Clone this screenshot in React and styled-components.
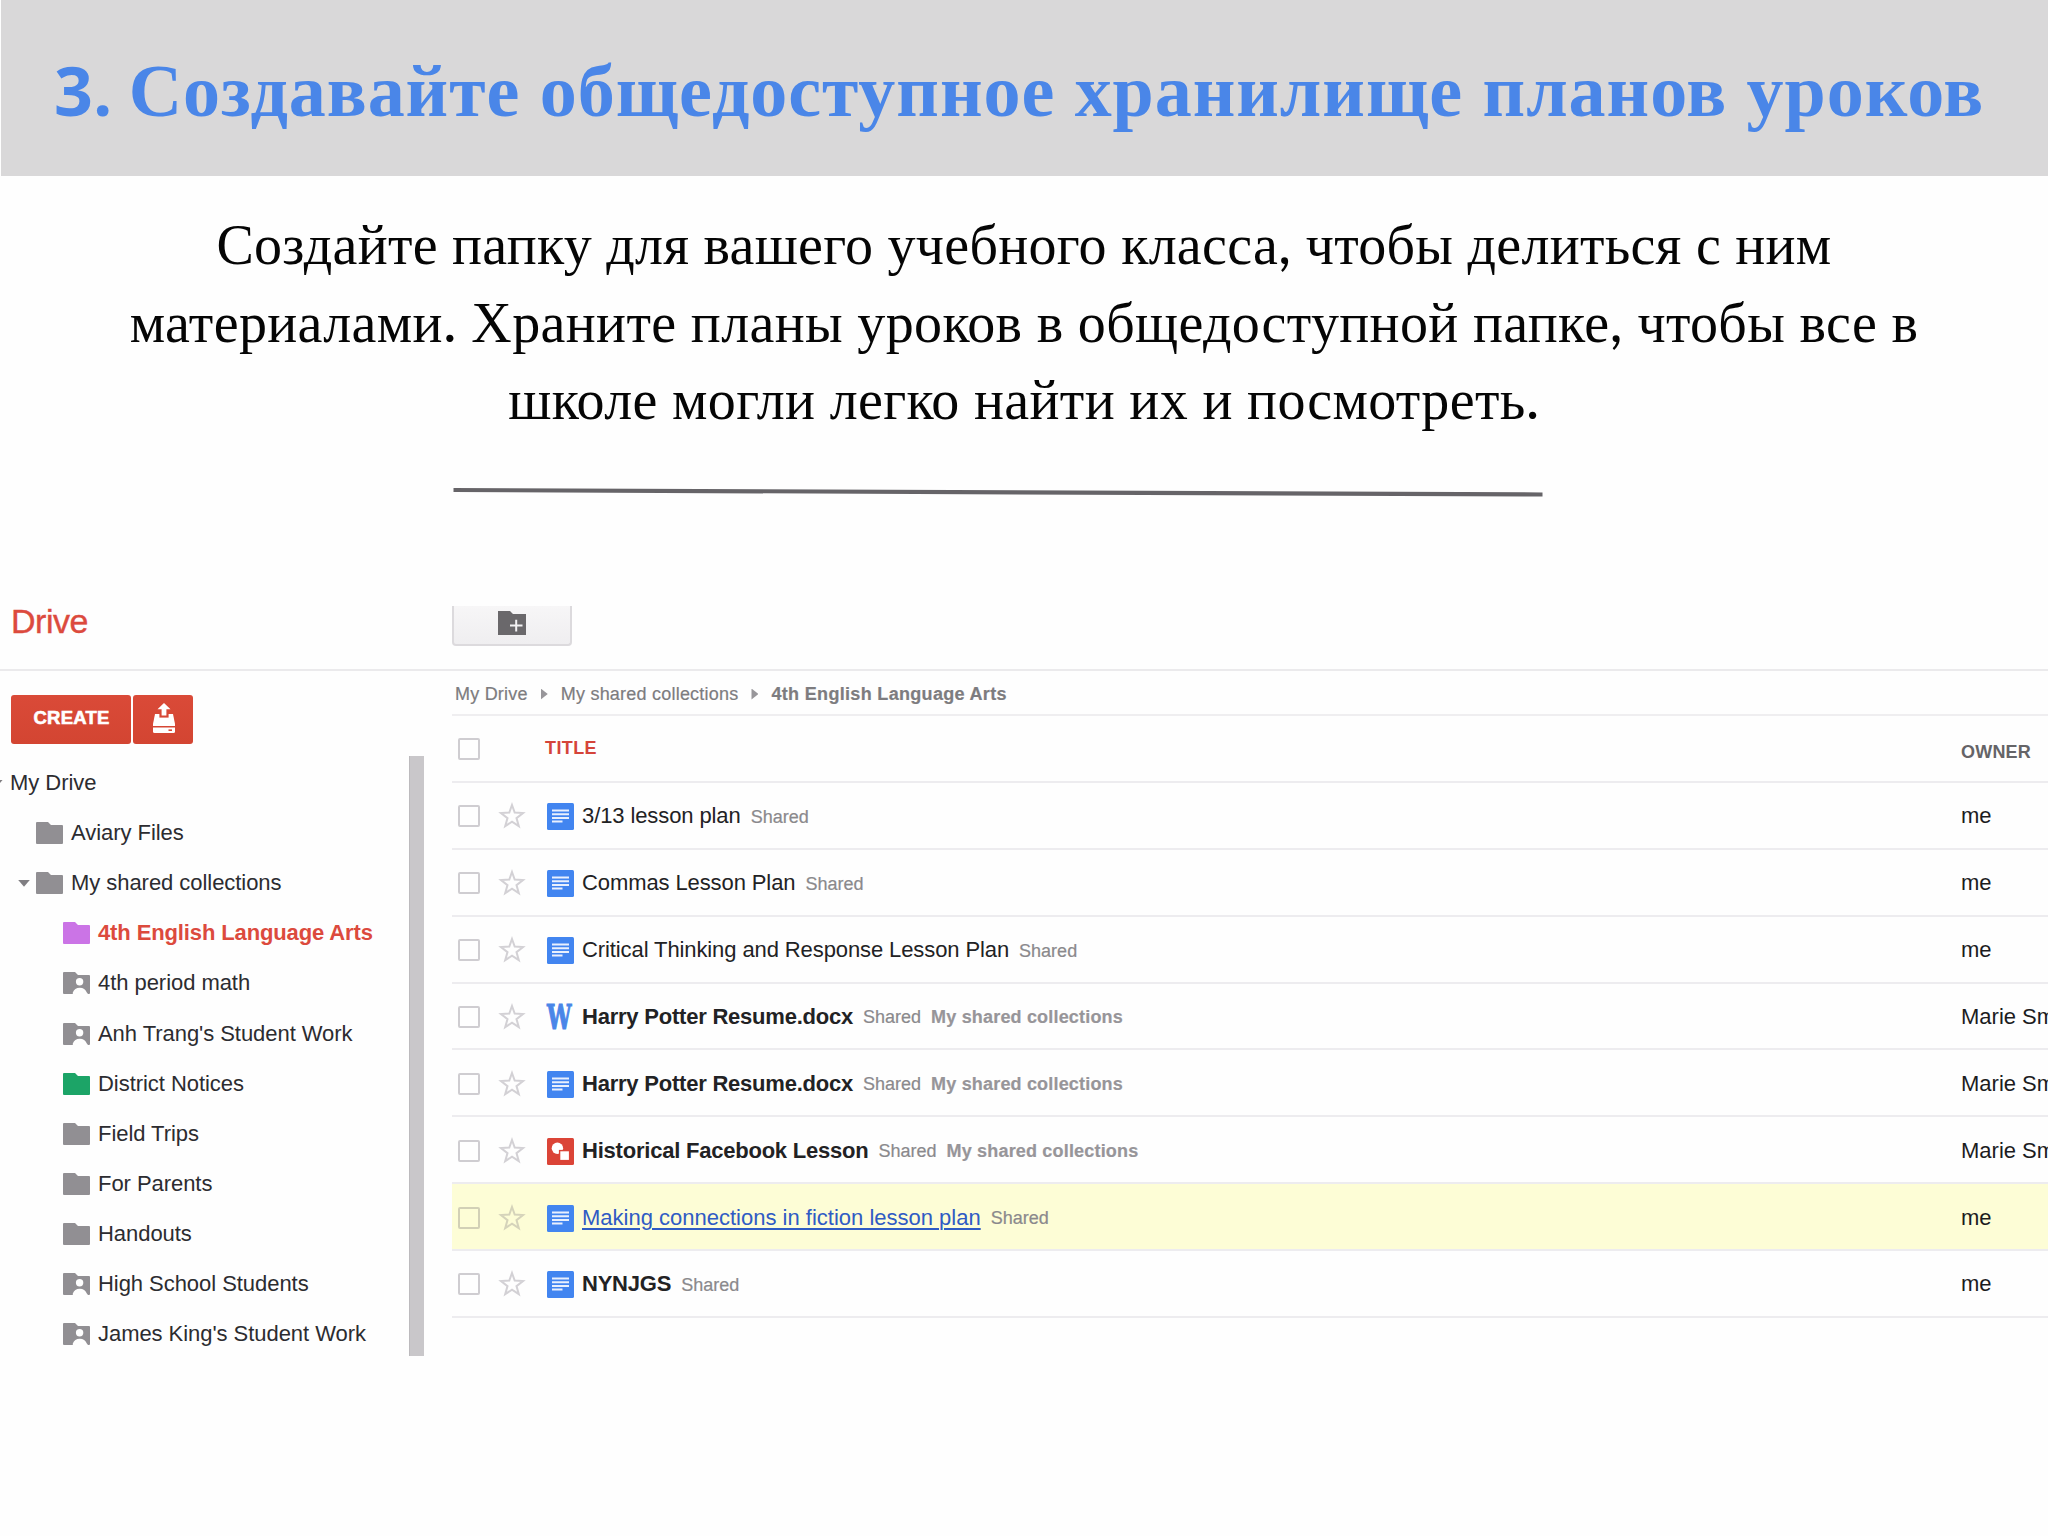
import * as React from 'react';
import styled, { createGlobalStyle } from 'styled-components';

const GlobalStyle = createGlobalStyle`
  * { box-sizing: border-box; }
  body {
    margin: 0;
    background: #fefefe;
    font-family: "Liberation Sans", Arial, sans-serif;
  }
`

const Slide = styled.div`
  width: 2048px;
  height: 1536px;
  overflow: hidden;
  display: flex;
  flex-direction: column;
`

const Banner = styled.header`
  height: 176px;
  margin-left: 1px;
  padding: 6px 0 0 53px;
  background: #d9d8d9;
  display: flex;
  align-items: center;
`

const Heading = styled.h1`
  margin: 0;
  font-family: "Liberation Serif", "Times New Roman", serif;
  font-size: 74px;
  line-height: 90px;
  font-weight: bold;
  letter-spacing: 0.95px;
  white-space: nowrap;
  color: #4a86e8;
`

const Num = styled.span`
  font-family: "Open Sans", sans-serif;
  font-size: 68px;
  line-height: 1;
  letter-spacing: 0;
  margin-right: -3px;
`

const Lead = styled.div`
  height: 283px;
  padding-top: 31px;
  font-family: "Liberation Serif", "Times New Roman", serif;
  font-size: 56px;
  line-height: 77.6px;
  text-align: center;
  color: #050505;
`

const Line = styled.div`
  white-space: nowrap;
  letter-spacing: ${p => p.$spacing || '0.36px'};
`

const Mark = styled.span`
  font-family: Lato, sans-serif;
  font-size: 58px;
  line-height: 1;
`

const Rule = styled.svg`
  display: block;
  margin: 28px 0 0 453px;
  flex: none;
`

const Toolbar = styled.div`
  height: 65px;
  margin-top: 107px;
  flex: none;
  display: flex;
  border-bottom: 2px solid #ebeaec;
`

const Brand = styled.div`
  width: 452px;
  padding: 1px 0 0 11px;
  font-size: 34px;
  line-height: 29px;
  letter-spacing: -0.5px;
  color: #dc4a3d;
  -webkit-text-stroke: 0.4px #dc4a3d;
`

const NewFolder = styled.div`
  width: 120px;
  height: 40px;
  padding-top: 5px;
  display: flex;
  justify-content: center;
  background: linear-gradient(#f7f6f7, #efeef0);
  border: 2px solid #dcdadd;
  border-top: 0;
  border-radius: 0 0 4px 4px;
`

const Content = styled.div`
  display: flex;
`

const Sidebar = styled.nav`
  width: 408px;
  padding-top: 24px;
`

const Buttons = styled.div`
  display: flex;
  gap: 2px;
  padding-left: 11px;
  margin-bottom: 14px;
`

const RedButton = styled.div`
  width: ${p => p.$w}px;
  height: 49px;
  display: flex;
  align-items: center;
  justify-content: center;
  padding: 0 0 3px 1px;
  border-radius: 3px;
  background: linear-gradient(#da4a38, #d34532);
  color: #fff;
  font-size: 18.5px;
  font-weight: bold;
  letter-spacing: 0.2px;
  -webkit-text-stroke: 0.6px #fff;
`

const TreeRow = styled.div`
  height: 50.1px;
  padding-left: ${p => p.$indent}px;
  display: flex;
  align-items: center;
  font-size: 22px;
  white-space: nowrap;
  letter-spacing: ${p => (p.$active ? '-0.12px' : '-0.05px')};
  font-weight: ${p => (p.$active ? 'bold' : 'normal')};
  color: ${p => (p.$active ? '#dc4a3d' : '#2c2c30')};
  svg { flex: none; }
`

const Caret = styled.span`
  width: 12px;
  height: 7px;
  margin-right: 6px;
  background: #807e82;
  clip-path: polygon(0 0, 100% 0, 50% 100%);
`

const RootCaret = styled(Caret)`
  margin-left: -9px;
`

const TreeLabel = styled.span`
  margin-left: ${p => p.$gap}px;
`

const Scrollbar = styled.div`
  width: 15px;
  height: 600px;
  margin: 85px 28px 0 1px;
  background: #c9c7ca;
  border-left: 1px solid #bcbabd;
`

const Main = styled.main`
  flex: 1;
  min-width: 0;
`

const Crumbs = styled.div`
  height: 45px;
  padding: 3px 0 0 3px;
  display: flex;
  align-items: center;
  font-size: 18px;
  color: #7d7c7f;
  border-bottom: 2px solid #efeef0;
`

const Crumb = styled.span`
  letter-spacing: ${p => (p.$current ? '0.32px' : '0.22px')};
  font-weight: ${p => (p.$current ? 'bold' : 'normal')};
  -webkit-text-stroke: 0.2px #7d7c7f;
`

const CrumbArrow = styled.span`
  width: 7px;
  height: 11px;
  margin: 0 13px 0 13px;
  background: #98969a;
  clip-path: polygon(0 0, 100% 50%, 0 100%);
`

const Row = styled.div`
  height: 66.88px;
  padding: 2px 0 0 6px;
  display: flex;
  align-items: center;
  border-bottom: 2px solid #edecef;
  background: ${p => (p.$hover ? '#fdfdd6' : 'transparent')};
`

const HeadRow = styled(Row)`
  padding-top: 1px;
`

const Checkbox = styled.span`
  width: 22px;
  height: 22px;
  flex: none;
  border: 2px solid ${p => (p.$hover ? '#d2d0b6' : '#cfcdd1')};
  border-radius: 2px;
`

const StarCell = styled.span`
  width: 67px;
  padding-left: 18px;
  display: flex;
`

const FileIcon = styled.span`
  width: 27px;
  margin-right: 8px;
  display: flex;
  padding-top: 1px;
`

const WordMark = styled.span`
  display: block;
  font-family: "DejaVu Serif", serif;
  font-size: 33px;
  font-weight: bold;
  line-height: 27px;
  color: #4a86e8;
  -webkit-text-stroke: 1.2px #4a86e8;
  transform: scaleX(0.66);
  transform-origin: 0 50%;
`

const FileName = styled.span`
  flex: none;
  font-size: 22px;
  white-space: nowrap;
  letter-spacing: ${p => (p.$bold ? '-0.22px' : p.$hover ? '0' : '-0.1px')};
  font-weight: ${p => (p.$bold ? 'bold' : 'normal')};
  color: ${p => (p.$hover ? '#2f5bc4' : '#222224')};
  text-decoration: ${p => (p.$hover ? 'underline' : 'none')};
  text-underline-offset: 3px;
  text-decoration-thickness: 2px;
`

const Tag = styled.span`
  margin: 2px 0 0 10px;
  font-size: 18px;
  white-space: nowrap;
  letter-spacing: ${p => (p.$bold ? '0.18px' : '0')};
  color: ${p => (p.$bold ? '#979599' : '#8a898c')};
  font-weight: ${p => (p.$bold ? 'bold' : 'normal')};
  -webkit-text-stroke: 0.2px currentColor;
`

const Owner = styled.span`
  width: 87px;
  margin-left: auto;
  flex: none;
  overflow: hidden;
  white-space: nowrap;
  font-size: 22px;
  color: #1c1c1e;
`

const TitleHead = styled.span`
  padding-left: 65px;
  font-size: 18px;
  font-weight: bold;
  letter-spacing: 0.4px;
  color: #d5443a;
`

const OwnerHead = styled(Owner)`
  padding-top: 7px;
  font-size: 18px;
  font-weight: bold;
  letter-spacing: 0.2px;
  color: #656467;
`

const Folder = ({ color = '#918f93', person }) => (
  <svg width="27" height="22" viewBox="0 0 27 22">
    <path d="M1 0H12L15 3H26Q27 3 27 4V21Q27 22 26 22H1Q0 22 0 21V1Q0 0 1 0Z" fill={color} />
    {person && (
      <g fill="#fefefe">
        <circle cx="16.6" cy="9.8" r="3.7" />
        <path d="M9.8 22V20.5Q11.5 15.8 16.8 15.8Q22 15.8 23.8 20.5L25 22Z" />
      </g>
    )}
  </svg>
)

const FolderPlus = () => (
  <svg width="28" height="24" viewBox="0 0 28 24">
    <path d="M0 0H12L15 3H28V24H0Z" fill="#6a686b" />
    <path d="M12 14.5H24.5M18.2 8.8V20.5" stroke="#f2f1f3" strokeWidth="2" />
  </svg>
)

const Upload = () => (
  <svg width="22" height="30" viewBox="0 0 22 30">
    <path d="M2 11H20L22 21V23H0V21Z" fill="#fff" />
    <path d="M6.4 8H15.6V14.6H6.4Z" fill="#d74836" />
    <path d="M11 0L17.5 6.2H13.4V12.6H8.6V6.2H4.5Z" fill="#fff" />
    <path d="M0 24.6H22V28.5Q22 30 20.5 30H1.5Q0 30 0 28.5Z" fill="#fff" />
    <path d="M15.5 26.4H19V28H15.5Z" fill="#d74836" />
  </svg>
)

const Star = ({ hover }) => (
  <svg width="28" height="28" viewBox="0 0 28 28">
    <path
      d="M14 3L16.7 10.6L25 11L18.5 16.1L20.8 24.2L14 19.7L7.2 24.2L9.5 16.1L3 11L11.3 10.6Z"
      fill="none"
      stroke={hover ? '#d5d3ba' : '#d3d1d5'}
      strokeWidth="2"
    />
  </svg>
)

const Doc = () => (
  <svg width="27" height="27" viewBox="0 0 27 27">
    <rect width="27" height="27" rx="1.5" fill="#4285f0" />
    <path d="M5 7.5H22M5 11.2H22M5 14.9H22M5 18.4H15.5" stroke="#e9f0fd" strokeWidth="2" />
  </svg>
)

const Drawing = () => (
  <svg width="27" height="27" viewBox="0 0 27 27">
    <rect width="27" height="27" rx="1.5" fill="#db4437" />
    <circle cx="10.4" cy="10.3" r="5.7" fill="#fff" />
    <rect x="12.6" y="12.6" width="10" height="10" fill="#fff" stroke="#db4437" strokeWidth="1.4" />
  </svg>
)

const folders = [
  { name: '4th English Language Arts', color: '#cb74e6', active: true },
  { name: '4th period math', person: true },
  { name: "Anh Trang's Student Work", person: true },
  { name: 'District Notices', color: '#1ca467' },
  { name: 'Field Trips' },
  { name: 'For Parents' },
  { name: 'Handouts' },
  { name: 'High School Students', person: true },
  { name: "James King's Student Work", person: true },
]

const files = [
  { name: '3/13 lesson plan', owner: 'me' },
  { name: 'Commas Lesson Plan', owner: 'me' },
  { name: 'Critical Thinking and Response Lesson Plan', owner: 'me' },
  { name: 'Harry Potter Resume.docx', owner: 'Marie Sm', bold: true, path: true, type: 'word' },
  { name: 'Harry Potter Resume.docx', owner: 'Marie Sm', bold: true, path: true },
  { name: 'Historical Facebook Lesson', owner: 'Marie Sm', bold: true, path: true, type: 'drawing' },
  { name: 'Making connections in fiction lesson plan', owner: 'me', hover: true },
  { name: 'NYNJGS', owner: 'me', bold: true },
]

const icons = {
  word: <WordMark>W</WordMark>,
  drawing: <Drawing />,
}

export default function App() {
  return (
    <Slide>
      <GlobalStyle />
      <Banner>
        <Heading><Num>3.</Num> Создавайте общедоступное хранилище планов уроков</Heading>
      </Banner>
      <Lead>
        <Line $spacing="0.28px">Создайте папку для вашего учебного класса<Mark>,</Mark> чтобы делиться с ним</Line>
        <Line>материалами<Mark>.</Mark> Храните планы уроков в общедоступной папке<Mark>,</Mark> чтобы все в</Line>
        <Line>школе могли легко найти их и посмотреть<Mark>.</Mark></Line>
      </Lead>
      <Rule width="1090" height="12" viewBox="0 0 1090 12">
        <path d="M0.5 3L1089.5 7.5" stroke="#666468" strokeWidth="4.2" />
      </Rule>

      <Toolbar>
        <Brand>Drive</Brand>
        <NewFolder><FolderPlus /></NewFolder>
      </Toolbar>

      <Content>
        <Sidebar>
          <Buttons>
            <RedButton $w={120}>CREATE</RedButton>
            <RedButton $w={60}><Upload /></RedButton>
          </Buttons>
          <TreeRow $indent={0}>
            <RootCaret />
            <TreeLabel $gap={1}>My Drive</TreeLabel>
          </TreeRow>
          <TreeRow $indent={36}>
            <Folder />
            <TreeLabel $gap={8}>Aviary Files</TreeLabel>
          </TreeRow>
          <TreeRow $indent={18}>
            <Caret />
            <Folder />
            <TreeLabel $gap={8}>My shared collections</TreeLabel>
          </TreeRow>
          {folders.map(f => (
            <TreeRow key={f.name} $indent={63} $active={f.active}>
              <Folder color={f.color} person={f.person} />
              <TreeLabel $gap={8}>{f.name}</TreeLabel>
            </TreeRow>
          ))}
        </Sidebar>
        <Scrollbar />

        <Main>
          <Crumbs>
            <Crumb>My Drive</Crumb>
            <CrumbArrow />
            <Crumb>My shared collections</Crumb>
            <CrumbArrow />
            <Crumb $current>4th English Language Arts</Crumb>
          </Crumbs>
          <HeadRow>
            <Checkbox />
            <TitleHead>TITLE</TitleHead>
            <OwnerHead>OWNER</OwnerHead>
          </HeadRow>
          {files.map((f, i) => (
            <Row key={i} $hover={f.hover}>
              <Checkbox $hover={f.hover} />
              <StarCell><Star hover={f.hover} /></StarCell>
              <FileIcon>{icons[f.type] || <Doc />}</FileIcon>
              <FileName $bold={f.bold} $hover={f.hover}>{f.name}</FileName>
              <Tag>Shared</Tag>
              {f.path && <Tag $bold>My shared collections</Tag>}
              <Owner>{f.owner}</Owner>
            </Row>
          ))}
        </Main>
      </Content>
    </Slide>
  );
}
